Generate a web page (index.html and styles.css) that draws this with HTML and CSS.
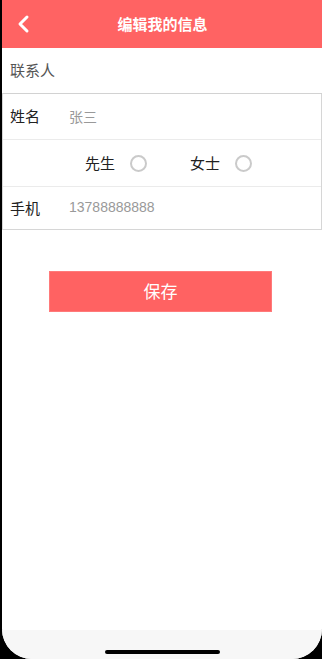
FILE: index.html
```html
<!DOCTYPE html>
<html lang="zh">
<head>
<meta charset="utf-8">
<title>编辑我的信息</title>
<link rel="stylesheet" href="styles.css">
</head>
<body>
<div class="screen">
  <header class="topbar">
    <span class="back">
      <svg width="14" height="20" viewBox="0 0 14 20"><polyline points="10,3 3,10 10,17" fill="none" stroke="#fff" stroke-width="3" stroke-linecap="round" stroke-linejoin="round"/></svg>
    </span>
    <h1 class="title">编辑我的信息</h1>
  </header>
  <div class="section-title">联系人</div>
  <div class="group">
    <div class="row row-name">
      <span class="label">姓名</span>
      <span class="value">张三</span>
    </div>
    <div class="row row-gender">
      <span class="option">先生<span class="radio"></span></span>
      <span class="option">女士<span class="radio"></span></span>
    </div>
    <div class="row row-phone">
      <span class="label">手机</span>
      <span class="value">13788888888</span>
    </div>
  </div>
  <button class="save">保存</button>
  <div class="spacer"></div>
  <div class="bottombar"><span class="home"></span></div>
</div>
</body>
</html>
```
FILE: styles.css
```css
html, body {
  margin: 0;
  padding: 0;
}
body {
  background: #000;
  width: 322px;
  height: 659px;
  overflow: hidden;
  font-family: "Noto Sans CJK SC", "Liberation Sans", sans-serif;
}
.screen {
  margin-left: 2px;
  width: 320px;
  height: 659px;
  background: #fff;
  border-radius: 0 0 30px 30px;
  overflow: hidden;
  display: flex;
  flex-direction: column;
}
.topbar {
  height: 48px;
  background: #ff6363;
  display: flex;
  align-items: center;
  justify-content: center;
  position: relative;
  flex-shrink: 0;
  box-sizing: border-box;
  padding-bottom: 2px;
}
.back {
  position: absolute;
  left: 15px;
  top: 14px;
  display: block;
  line-height: 0;
}
.title {
  margin: 0;
  color: #fff;
  font-size: 15px;
  font-weight: bold;
  line-height: 1;
  margin-left: 1px;
}
.section-title {
  height: 45px;
  box-sizing: border-box;
  padding-bottom: 3px;
  border-bottom: 1px solid #d2d2d2;
  display: flex;
  align-items: center;
  padding-left: 8px;
  font-size: 15px;
  color: #555;
  flex-shrink: 0;
  box-sizing: content-box;
  height: 42px;
}
.group {
  border: 1px solid #d6d6d6;
  border-top: none;
  flex-shrink: 0;
}
.row {
  display: flex;
  align-items: center;
  padding-left: 7px;
  padding-bottom: 2px;
  border-bottom: 1px solid #ebebeb;
}
.row:last-child {
  border-bottom: none;
}
.row-name { height: 43px; }
.row-gender { height: 44px; padding-left: 82px; }
.row-phone { height: 40px; }
.label {
  width: 59px;
  font-size: 15px;
  color: #222;
}
.value {
  font-size: 14px;
  color: #999;
  font-family: "Liberation Sans", "Noto Sans CJK SC", sans-serif;
}
.row-name .value {
  font-family: "Noto Sans CJK SC", sans-serif;
}
.option {
  display: flex;
  align-items: center;
  font-size: 15px;
  color: #222;
  gap: 15px;
  margin-right: 43px;
}
.radio {
  width: 13px;
  height: 13px;
  border: 2px solid #cacaca;
  border-radius: 50%;
  display: inline-block;
  margin-top: 2px;
}
.save {
  margin: 41px 0 0 47px;
  width: 223px;
  height: 41px;
  background: #ff6262;
  color: #fff;
  border: 1px solid #ff7a7a;
  font-family: "Noto Sans CJK SC", sans-serif;
  font-size: 17px;
  padding: 0 0 2px;
  flex-shrink: 0;
}
.spacer {
  flex: 1;
}
.bottombar {
  height: 29px;
  background: #f7f7f7;
  display: flex;
  justify-content: center;
  align-items: flex-end;
  flex-shrink: 0;
}
.home {
  width: 115px;
  height: 4px;
  background: #000;
  border-radius: 2px;
  margin-bottom: 5px;
}
```
